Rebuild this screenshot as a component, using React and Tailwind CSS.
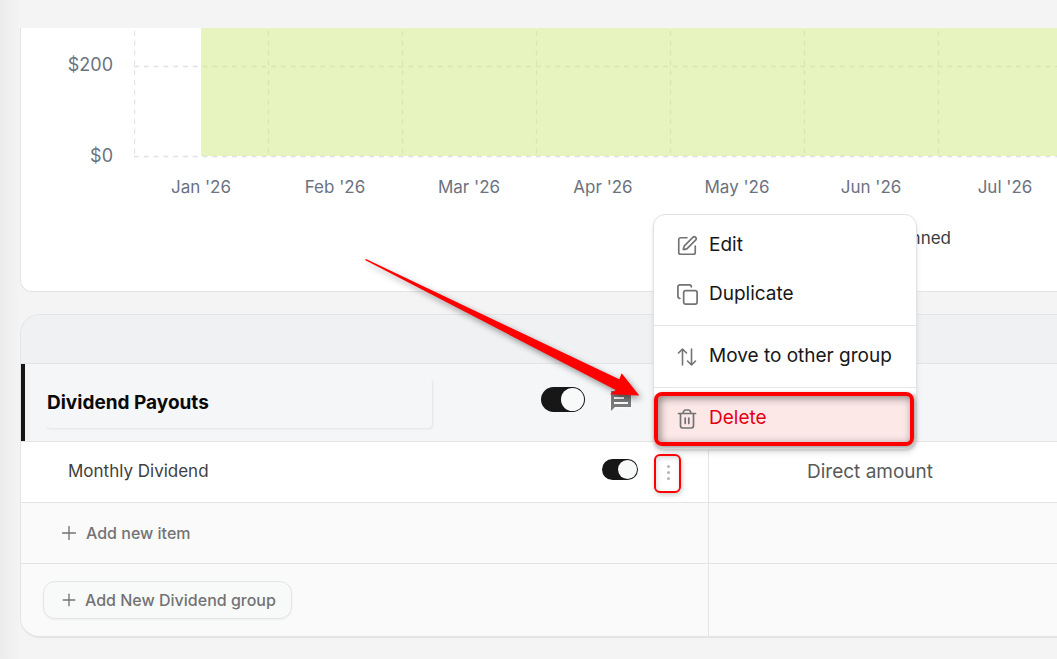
import React, { useState } from "react";
import { Copy, Plus, SquarePen } from "lucide-react";

const months = ["Jan '26", "Feb '26", "Mar '26", "Apr '26", "May '26", "Jun '26", "Jul '26"];
const MONTH_WIDTH = 134;

const Toggle = ({ label, small }) => {
  const [on, setOn] = useState(true);
  return (
    <input
      type="checkbox"
      role="switch"
      aria-label={label}
      checked={on}
      onChange={() => setOn(!on)}
      className={
        small
          ? "mb-1.5 flex h-[21px] w-9 shrink-0 appearance-none items-center rounded-full bg-neutral-300 p-px before:size-[19px] before:rounded-full before:bg-[#f8faf9] checked:justify-end checked:bg-[#171717]"
          : "mb-1.5 flex h-[25px] w-11 shrink-0 appearance-none items-center rounded-full bg-neutral-300 p-px before:size-[23px] before:rounded-full before:bg-[#f8faf9] checked:justify-end checked:bg-[#171717]"
      }
    />
  );
};

const TrashIcon = () => (
  <svg className="size-5" viewBox="0 0 20 20" fill="none" stroke="currentColor" strokeWidth="1.7" strokeLinecap="round" strokeLinejoin="round">
    <path d="M1.500 4.500h17M3.500 4.500v12.300a2.200 2.200 0 0 0 2.200 2.200h8.600a2.200 2.200 0 0 0 2.200-2.200V4.500M6 4.200l.6-1.800A2 2 0 0 1 8.500 1h3a2 2 0 0 1 1.900 1.400l.6 1.800M8.200 9v5.500M11.800 9v5.500" />
  </svg>
);

const MoveIcon = () => (
  <svg className="size-5" viewBox="0 0 20 20" fill="none" stroke="currentColor" strokeWidth="1.6" strokeLinecap="round" strokeLinejoin="round">
    <path d="M5.500 18V2M1.500 6l4-4 4 4M14.500 2v16M10.500 14l4 4 4-4" />
  </svg>
);

const CommentIcon = () => (
  <svg className="size-6 drop-shadow-[0_0_2px_#ffffff]" viewBox="0 0 24 24" fill="#7a7a7a">
    <path fillRule="evenodd" d="M2 2h20v16H6l-4 4V2zm3 6v2h10V8zm0 5v2h14v-2z" />
  </svg>
);

const Chart = () => (
  <div className="flex">
    <div className="flex w-[92px] shrink-0 flex-col items-end pt-[25px] text-lg leading-6 text-[#6b7280]">
      <span>$200</span>
      <span className="mt-[67px]">$0</span>
    </div>
    <svg className="ml-[21px] h-[180px] min-w-0 flex-1 overflow-hidden" role="img" aria-label="Planned dividends by month">
      <g stroke="#e0e0e9" strokeWidth="1.3" strokeDasharray="4.9 4.9">
        <line x1="0" y1="38.500" x2="1400" y2="38.500" />
        <line x1="0" y1="128.500" x2="1400" y2="128.500" />
        {months.map((month, i) => (
          <line key={month} x1={i * MONTH_WIDTH + 0.5} y1="3" x2={i * MONTH_WIDTH + 0.5} y2="128" />
        ))}
      </g>
      <rect x="67" y="0" width="1400" height="128" fill="#d0ea80" fillOpacity="0.5" />
      <g fill="#6b7280" fontSize="17" textAnchor="middle">
        {months.map((month, i) => (
          <text key={month} x={i * MONTH_WIDTH + 67} y="165">
            {month}
          </text>
        ))}
      </g>
    </svg>
  </div>
);

const MenuItem = ({ icon, children, danger }) => (
  <button
    role="menuitem"
    className={
      danger
        ? "flex h-[49px] w-full items-center gap-3 bg-[#fde8e8] px-[23px] text-[19px] whitespace-nowrap text-[#e40014]"
        : "flex h-[49px] w-full items-center gap-3 px-[23px] text-[19px] whitespace-nowrap text-[#171717]"
    }
  >
    <span className="flex size-5 shrink-0 items-center justify-center text-[#737373]">{icon}</span>
    {children}
  </button>
);

const ContextMenu = () => (
  <div
    role="menu"
    className="absolute left-[653px] top-[214px] w-[264px] divide-y divide-[#e5e5e5] rounded-xl border border-[#e2e2e2] bg-white shadow-md"
  >
    <div className="py-1.5">
      <MenuItem icon={<SquarePen size={22} strokeWidth={1.8} className="shrink-0" />}>Edit</MenuItem>
      <MenuItem icon={<Copy size={23} strokeWidth={1.8} className="shrink-0" />}>Duplicate</MenuItem>
    </div>
    <div className="py-1.5">
      <MenuItem icon={<MoveIcon />}>Move to other group</MenuItem>
    </div>
    <div className="py-1.5">
      <MenuItem icon={<TrashIcon />} danger>
        Delete
      </MenuItem>
    </div>
  </div>
);

// Red marks that point the reader at the delete action
const Callouts = () => (
  <div className="pointer-events-none">
    <svg className="absolute left-[360px] top-[250px] h-[160px] w-[290px] drop-shadow-[2px_3px_3px_rgba(0,0,0,0.4)]" viewBox="360 250 290 160">
      <path d="M365 260L366 259L619.300 379.300L621.700 373.300L639.300 395.500L610 394.300L615.700 390Z" fill="#ff0000" />
    </svg>
    <div className="absolute left-[654px] top-[392px] h-[54px] w-[260px] rounded-lg border-4 border-[#ff0000] shadow-[1px_2px_4px_rgba(0,0,0,0.4),inset_2px_2px_8px_rgba(0,0,0,0.45)]" />
    <div className="absolute left-[654px] top-[454px] h-[39px] w-[27px] rounded-md border-2 border-[#ff0000] shadow-[1px_2px_5px_rgba(0,0,0,0.2),inset_1px_2px_5px_rgba(0,0,0,0.15)]" />
  </div>
);

const DividendTable = () => (
  <div className="mt-[22px] overflow-hidden rounded-l-[20px] border border-b-2 border-r-0 border-[#e2e4e5]">
    <table className="w-full table-fixed border-separate border-spacing-0 text-left">
      <colgroup>
        <col className="w-[688px]" />
        <col />
      </colgroup>
      <thead>
        <tr className="h-[49px] bg-[#eff1f3]">
          <th className="border-b border-[#e2e4e5] p-0" />
          <th className="border-b border-[#e2e4e5] p-0" />
        </tr>
      </thead>
      <tbody>
        <tr className="h-[78px] bg-[#f5f6f8]">
          <td className="border-b border-[#e2e4e5] p-0">
            <div className="flex h-[77px] items-center border-l-4 border-[#171717] pl-5">
              <input
                aria-label="Group name"
                defaultValue="Dividend Payouts"
                className="h-[50px] w-[387px] rounded-sm pl-0.5 text-[19px] font-bold text-[#0a0a0a] shadow-[1px_1px_2px_rgba(0,0,0,0.08)]"
              />
              <div className="ml-auto flex items-center gap-6 pr-[76px]">
                <Toggle label="Dividend Payouts" />
                <button aria-label="Comments" className="mb-1">
                  <CommentIcon />
                </button>
              </div>
            </div>
          </td>
          <td className="border-b border-[#e2e4e5] p-0" />
        </tr>
        <tr className="h-[61px] bg-white">
          <td className="border-r border-b border-[#e2e4e5] p-0">
            <div className="flex items-center pl-[47px] pr-[34px]">
              <span className="text-[17px] text-[#404040]">Monthly Dividend</span>
              <div className="ml-auto flex items-center gap-6">
                <Toggle label="Monthly Dividend" small />
                <button aria-label="Item actions" className="flex w-3 flex-col items-center gap-[3px]">
                  <span className="size-[3px] rounded-full bg-[#b5b5b5]" />
                  <span className="size-[3px] rounded-full bg-[#b5b5b5]" />
                  <span className="size-[3px] rounded-full bg-[#b5b5b5]" />
                </button>
              </div>
            </div>
          </td>
          <td className="border-b border-[#e2e4e5] py-0 pl-[98px] text-[19px] text-[#595959]">Direct amount</td>
        </tr>
        <tr className="h-[61px] bg-[#fafafa]">
          <td className="border-r border-b border-[#e2e4e5] p-0">
            <button className="flex items-center gap-1.5 pl-[37px] text-base font-medium text-[#737373]">
              <Plus size={22} strokeWidth={1.5} />
              Add new item
            </button>
          </td>
          <td className="border-b border-[#e2e4e5] p-0" />
        </tr>
        <tr className="h-[72px] bg-[#fafafa]">
          <td className="border-r border-[#e2e4e5] p-0">
            <button className="ml-[22px] flex h-[38px] items-center gap-1.5 rounded-xl border border-[#e2e5e4] bg-[#f8faf9] px-[15px] text-base font-medium text-[#737373] shadow-xs">
              <Plus size={20} strokeWidth={1.6} />
              Add New Dividend group
            </button>
          </td>
          <td className="p-0" />
        </tr>
      </tbody>
    </table>
  </div>
);

export default function App() {
  return (
    <div className="relative flex min-h-screen overflow-hidden bg-[#f4f4f4] font-['Inter','Liberation_Sans',sans-serif]">
      <div className="w-5 shrink-0 bg-linear-to-r from-[#ececec] to-[#f4f4f4]" />
      <main className="min-w-0 flex-1 pt-7">
        <section className="h-[264px] rounded-bl-xl border-b border-l border-[#e2e4e5] bg-white">
          <Chart />
          <p className="mt-5 pr-[106px] text-right text-[17px] leading-5 text-[#373d3f]">Planned</p>
        </section>
        <DividendTable />
      </main>
      <ContextMenu />
      <Callouts />
    </div>
  );
}
